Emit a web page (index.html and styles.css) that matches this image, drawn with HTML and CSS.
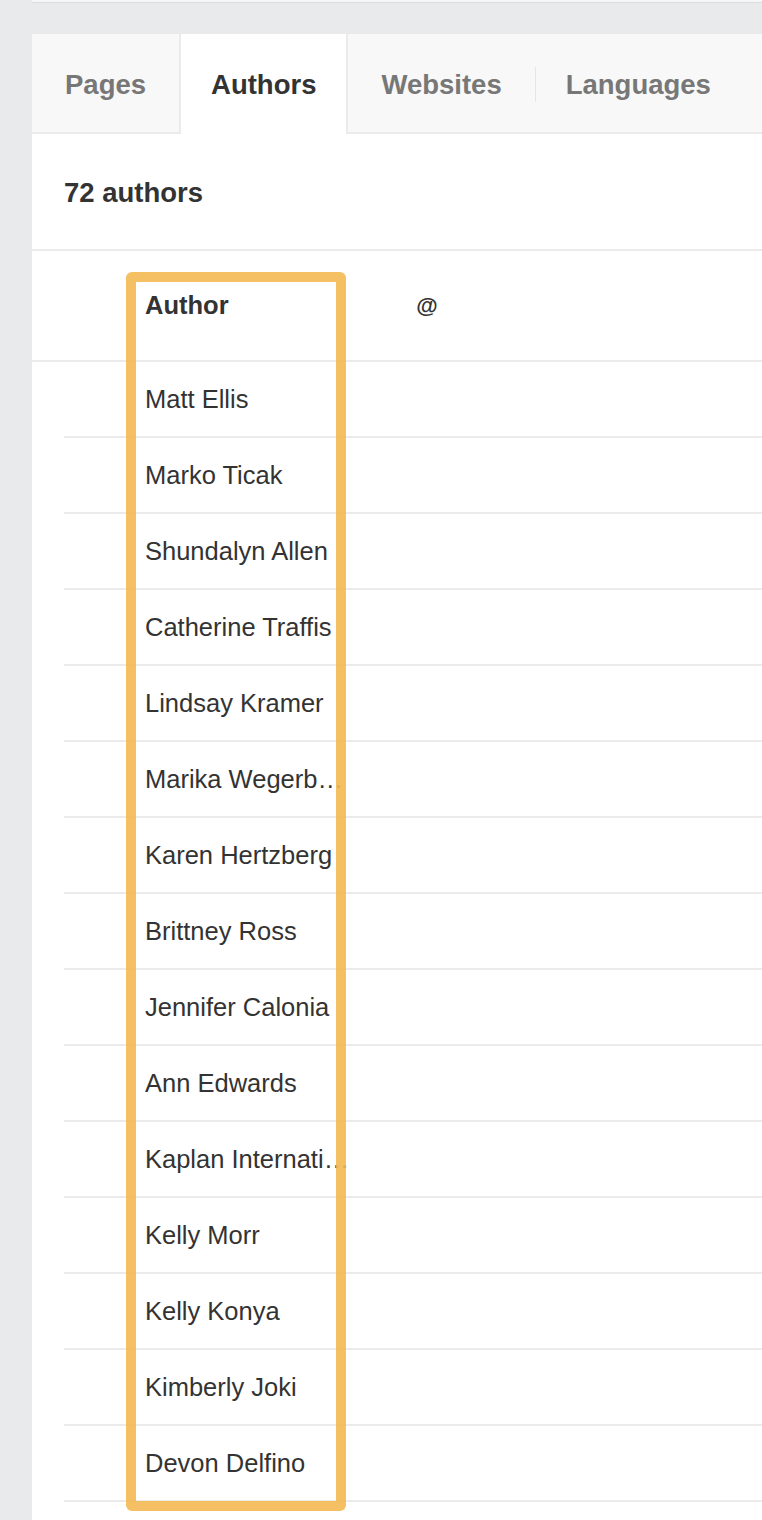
FILE: index.html
```html
<!DOCTYPE html>
<html lang="en">
<head>
<meta charset="utf-8">
<title>Authors</title>
<link rel="stylesheet" href="styles.css">
</head>
<body>
<div class="page">
  <div class="topbar"></div>
  <section class="panel">
    <nav class="tabs">
      <div class="tab">Pages</div>
      <div class="tab active">Authors</div>
      <div class="tab">Websites</div>
      <span class="tab-sep"></span>
      <div class="tab last">Languages</div>
    </nav>
    <h2 class="count">72 authors</h2>
    <div class="table">
      <div class="thead">
        <div class="cell name head">Author</div>
        <div class="cell at head">@</div>
      </div>
      <div class="row"><div class="cell name">Matt Ellis</div><div class="cell at"></div></div>
      <div class="row"><div class="cell name">Marko Ticak</div><div class="cell at"></div></div>
      <div class="row"><div class="cell name">Shundalyn Allen</div><div class="cell at"></div></div>
      <div class="row"><div class="cell name">Catherine Traffis</div><div class="cell at"></div></div>
      <div class="row"><div class="cell name">Lindsay Kramer</div><div class="cell at"></div></div>
      <div class="row"><div class="cell name">Marika Wegerberg</div><div class="cell at"></div></div>
      <div class="row"><div class="cell name">Karen Hertzberg</div><div class="cell at"></div></div>
      <div class="row"><div class="cell name">Brittney Ross</div><div class="cell at"></div></div>
      <div class="row"><div class="cell name">Jennifer Calonia</div><div class="cell at"></div></div>
      <div class="row"><div class="cell name">Ann Edwards</div><div class="cell at"></div></div>
      <div class="row"><div class="cell name">Kaplan International</div><div class="cell at"></div></div>
      <div class="row"><div class="cell name">Kelly Morr</div><div class="cell at"></div></div>
      <div class="row"><div class="cell name">Kelly Konya</div><div class="cell at"></div></div>
      <div class="row"><div class="cell name">Kimberly Joki</div><div class="cell at"></div></div>
      <div class="row"><div class="cell name">Devon Delfino</div><div class="cell at"></div></div>
    </div>
    <div class="highlight"></div>
  </section>
</div>
</body>
</html>
```

FILE: styles.css
```css
* { box-sizing: border-box; }

html, body {
  margin: 0;
  padding: 0;
}

body {
  background: #e9eaec;
  font-family: "Liberation Sans", Arial, sans-serif;
  color: #333;
  width: 762px;
  height: 1520px;
  overflow: hidden;
}

.page {
  padding-left: 32px;
}

.topbar {
  height: 3px;
  background: #f6f6f6;
  border-bottom: 1px solid #dcdddf;
  margin-bottom: 31px;
}

.panel {
  position: relative;
  background: #fff;
  min-height: 1500px;
}

.tabs {
  display: flex;
  align-items: center;
  height: 100px;
  background: #f8f8f8;
  border-bottom: 2px solid #ebebeb;
}

.tab {
  height: 98px;
  display: flex;
  align-items: center;
  padding: 4px 33px 0;
  font-size: 27.5px;
  font-weight: bold;
  color: #777;
  white-space: nowrap;
}

.tab.last {
  padding-left: 30px;
}

.tab.active {
  height: 100px;
  margin-bottom: -2px;
  padding: 4px 30px 2px;
  background: #fff;
  color: #333;
  border-left: 2px solid #ebebeb;
  border-right: 2px solid #ebebeb;
}

.tab-sep {
  width: 1px;
  height: 35px;
  margin-top: 2px;
  background: #e6e6e6;
  flex: none;
}

.count {
  margin: 0;
  height: 117px;
  display: flex;
  align-items: center;
  padding: 3px 0 0 32px;
  font-size: 27.5px;
  font-weight: bold;
  color: #333;
  border-bottom: 2px solid #ebebeb;
}

.thead {
  display: flex;
  align-items: center;
  height: 111px;
  padding-left: 113px;
  border-bottom: 2px solid #ebebeb;
}

.row {
  display: flex;
  align-items: center;
  height: 76px;
  margin-left: 32px;
  padding: 1px 0 0 81px;
  border-bottom: 2px solid #ebebeb;
}

.cell {
  font-size: 25.5px;
  line-height: 1.2;
}

.cell.name {
  width: 206px;
  white-space: nowrap;
  overflow: hidden;
  text-overflow: ellipsis;
  flex: none;
}

.cell.at {
  width: 152px;
  text-align: center;
  flex: none;
}

.cell.head {
  font-weight: bold;
}

.cell.at.head {
  font-size: 22px;
  padding-top: 2px;
}

.highlight {
  position: absolute;
  left: 94px;
  top: 238px;
  width: 220px;
  height: 1239px;
  border: 10px solid rgba(244, 184, 82, 0.9);
  border-radius: 6px;
  pointer-events: none;
}
```
